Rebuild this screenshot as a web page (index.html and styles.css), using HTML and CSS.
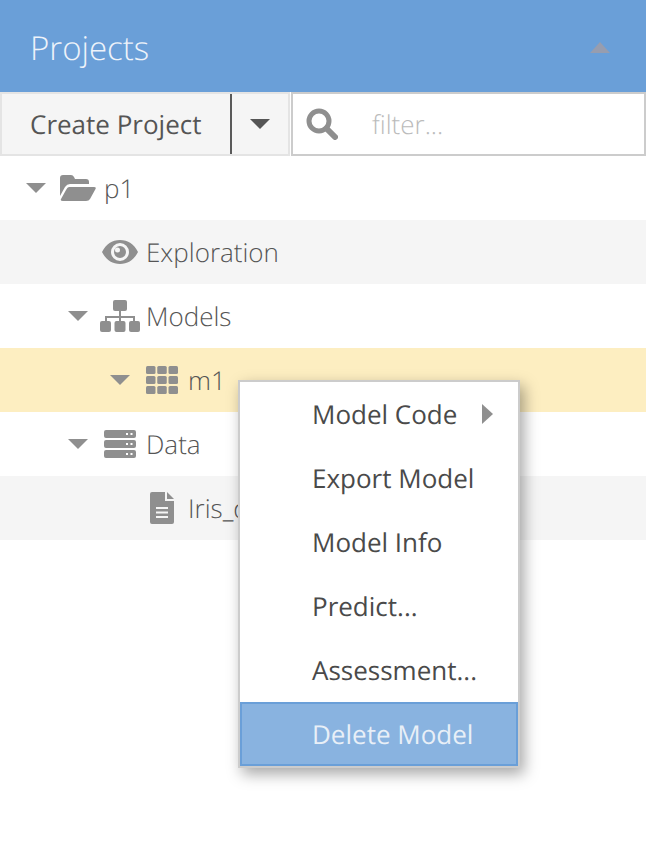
FILE: index.html
```html
<!DOCTYPE html>
<html>
<head>
    <title>Projects</title>
    <link rel="stylesheet" href="styles.css">
</head>
<body>

<div class="header">
    <span class="header-title">Projects</span>
    <span class="collapse-up"></span>
</div>

<div class="toolbar">
    <div class="create-btn">
        <span class="create-label">Create Project</span>
        <span class="create-drop"><span class="caret-dark"></span></span>
    </div>
    <div class="filter">
        <svg class="search-icon" viewBox="0 0 32 32">
            <circle cx="13" cy="13" r="10" fill="none" stroke="#8f8f8f" stroke-width="5"/>
            <path d="M20.5 20.5L29 29" fill="none" stroke="#8f8f8f" stroke-width="6" stroke-linecap="round"/>
        </svg>
        <span class="filter-text">filter...</span>
    </div>
</div>

<div class="tree">
    <div class="row depth0">
        <span class="caret"></span>
        <span class="icon-slot">
            <svg width="36" height="26" viewBox="0 0 36 26">
                <path fill="#8f8f8f" d="M0 21V3q0-3 3-3h8q2 0 3 2l1 2h11q3 0 3 3v2H10q-3 0-5 3z"/>
                <path fill="#8f8f8f" d="M9 12h25q2.500 0 1.500 2L30 24q-1 2-4 2H3q-3 0-2-2l5-9q1.500-3 3-3z"/>
            </svg>
        </span>
        <span class="label">p1</span>
    </div>
    <div class="row depth1 shaded">
        <span class="no-caret"></span>
        <span class="icon-slot">
            <svg width="36" height="24" viewBox="0 0 36 24">
                <path fill="#8f8f8f" fill-rule="evenodd" d="M0 12C4 4 10 0 18 0s14 4 18 12c-4 8-10 12-18 12S4 20 0 12zM18 3a9 9 0 1 0 0 18 9 9 0 0 0 0-18z"/>
                <path fill="#8f8f8f" fill-rule="evenodd" d="M18 6a6 6 0 1 1 0 12 6 6 0 0 1 0-12zM15.500 7.500a2.500 2.500 0 1 0 0 5 2.500 2.500 0 0 0 0-5z"/>
            </svg>
        </span>
        <span class="label">Exploration</span>
    </div>
    <div class="row depth1">
        <span class="caret"></span>
        <span class="icon-slot">
            <svg width="40" height="32" viewBox="0 0 40 32">
                <rect x="13" y="0" width="14" height="11" rx="2" fill="#8f8f8f"/>
                <path d="M20 11v10M6 21v-4h28v4" fill="none" stroke="#8f8f8f" stroke-width="2"/>
                <rect x="0" y="21" width="11" height="11" rx="2" fill="#8f8f8f"/>
                <rect x="14.500" y="21" width="11" height="11" rx="2" fill="#8f8f8f"/>
                <rect x="29" y="21" width="11" height="11" rx="2" fill="#8f8f8f"/>
            </svg>
        </span>
        <span class="label">Models</span>
    </div>
    <div class="row depth2 selected">
        <span class="caret"></span>
        <span class="icon-slot">
            <svg width="32" height="28" viewBox="0 0 32 28">
                <rect x="0" y="0" width="9.500" height="8" rx="1.500" fill="#8f8f8f"/>
                <rect x="11.250" y="0" width="9.500" height="8" rx="1.500" fill="#8f8f8f"/>
                <rect x="22.500" y="0" width="9.500" height="8" rx="1.500" fill="#8f8f8f"/>
                <rect x="0" y="10" width="9.500" height="8" rx="1.500" fill="#8f8f8f"/>
                <rect x="11.250" y="10" width="9.500" height="8" rx="1.500" fill="#8f8f8f"/>
                <rect x="22.500" y="10" width="9.500" height="8" rx="1.500" fill="#8f8f8f"/>
                <rect x="0" y="20" width="9.500" height="8" rx="1.500" fill="#8f8f8f"/>
                <rect x="11.250" y="20" width="9.500" height="8" rx="1.500" fill="#8f8f8f"/>
                <rect x="22.500" y="20" width="9.500" height="8" rx="1.500" fill="#8f8f8f"/>
            </svg>
        </span>
        <span class="label">m1</span>
    </div>
    <div class="row depth1">
        <span class="caret"></span>
        <span class="icon-slot">
            <svg width="32" height="28" viewBox="0 0 32 28">
                <path fill="#8f8f8f" fill-rule="evenodd" d="M2 0h28q2 0 2 2v4q0 2-2 2H2Q0 8 0 6V2q0-2 2-2zM22 3v2h2V3zM26.500 3v2h2V3z"/>
                <path fill="#8f8f8f" fill-rule="evenodd" d="M2 10h28q2 0 2 2v4q0 2-2 2H2q-2 0-2-2v-4q0-2 2-2zM22 13v2h2v-2zM26.500 13v2h2v-2z"/>
                <path fill="#8f8f8f" fill-rule="evenodd" d="M2 20h28q2 0 2 2v4q0 2-2 2H2q-2 0-2-2v-4q0-2 2-2zM22 23v2h2v-2zM26.500 23v2h2v-2z"/>
            </svg>
        </span>
        <span class="label">Data</span>
    </div>
    <div class="row depth2 shaded">
        <span class="no-caret"></span>
        <span class="icon-slot">
            <svg width="24" height="32" viewBox="0 0 24 32">
                <path fill="#8f8f8f" fill-rule="evenodd" d="M2 0h13v9h9v21q0 2-2 2H2q-2 0-2-2V2q0-2 2-2zM6 15v2h12v-2zM6 19.500v2h12v-2zM6 24v2h12v-2z"/>
                <path fill="#8f8f8f" d="M17 0l7 7h-7z"/>
            </svg>
        </span>
        <span class="label">Iris_data.csv</span>
    </div>
</div>

<div class="menu">
    <div class="menu-item">Model Code<span class="caret-right"></span></div>
    <div class="menu-item">Export Model</div>
    <div class="menu-item">Model Info</div>
    <div class="menu-item">Predict...</div>
    <div class="menu-item">Assessment...</div>
    <div class="menu-item active">Delete Model</div>
</div>

</body>
</html>
```

FILE: styles.css
```css
html, body {
    margin: 0;
    height: 100%;
    background: #fff;
}
body {
    font-family: "Open Sans", sans-serif;
    color: #555;
    overflow: hidden;
    position: relative;
    text-rendering: geometricPrecision;
}

.header {
    height: 92px;
    background: #6a9fd8;
    display: flex;
    align-items: center;
    justify-content: space-between;
    padding: 0 36px 0 30px;
    box-sizing: border-box;
}
.header-title {
    font-size: 33px;
    font-weight: 300;
    line-height: 44px;
    color: #eef3fa;
    position: relative;
    top: 2px;
}
.collapse-up {
    width: 0;
    height: 0;
    margin-top: 2px;
    border-left: 10px solid transparent;
    border-right: 10px solid transparent;
    border-bottom: 11px solid #979daf;
}

.toolbar {
    height: 64px;
    display: flex;
}
.create-btn {
    width: 290px;
    box-sizing: border-box;
    background: #f5f5f5;
    border: 2px solid #e4e4e4;
    display: flex;
}
.create-label {
    width: 230px;
    box-sizing: border-box;
    padding-left: 28px;
    border-right: 2px solid #5a5a5a;
    font-size: 26px;
    line-height: 60px;
}
.create-drop {
    flex: 1;
    display: flex;
    align-items: center;
    justify-content: center;
}
.caret-dark {
    width: 0;
    height: 0;
    margin-right: 1px;
    border-left: 10px solid transparent;
    border-right: 10px solid transparent;
    border-top: 10px solid #555;
}
.filter {
    flex: 1;
    box-sizing: border-box;
    margin-left: 1px;
    border: 2px solid #ccc;
    display: flex;
    align-items: center;
    padding-left: 13px;
}
.search-icon {
    width: 32px;
    height: 32px;
}
.filter-text {
    margin-left: 34px;
    font-size: 26px;
    font-weight: 300;
    color: #bbb;
}

.row {
    height: 64px;
    display: flex;
    align-items: center;
    box-sizing: border-box;
}
.depth0 { padding-left: 26px; }
.depth1 { padding-left: 68px; }
.depth2 { padding-left: 110px; }
.shaded { background: #f5f5f5; }
.selected { background: #fdeec1; }
.caret, .no-caret {
    width: 20px;
    margin-right: 6px;
    flex: none;
}
.caret {
    height: 0;
    border-left: 10px solid transparent;
    border-right: 10px solid transparent;
    border-top: 10px solid #8f8f8f;
    box-sizing: border-box;
}
.icon-slot {
    width: 52px;
    display: flex;
    justify-content: center;
    flex: none;
}
.icon-slot svg {
    display: block;
}
.label {
    font-size: 26px;
    font-weight: 300;
    white-space: nowrap;
}

.menu {
    position: absolute;
    left: 238px;
    top: 380px;
    width: 282px;
    box-sizing: border-box;
    background: #fff;
    border: 2px solid #ccc;
    box-shadow: 4px 6px 14px rgba(0, 0, 0, 0.35);
}
.menu-item {
    height: 64px;
    line-height: 64px;
    padding-left: 72px;
    font-size: 26px;
    color: #4a4a4a;
    position: relative;
}
.menu-item.active {
    background: #89b3e0;
    color: #e8eff7;
    outline: 2px solid #6a9fd8;
    outline-offset: -2px;
}
.caret-right {
    position: absolute;
    left: 242px;
    top: 22px;
    width: 0;
    height: 0;
    border-top: 10px solid transparent;
    border-bottom: 10px solid transparent;
    border-left: 11px solid #8f8f8f;
}
```
